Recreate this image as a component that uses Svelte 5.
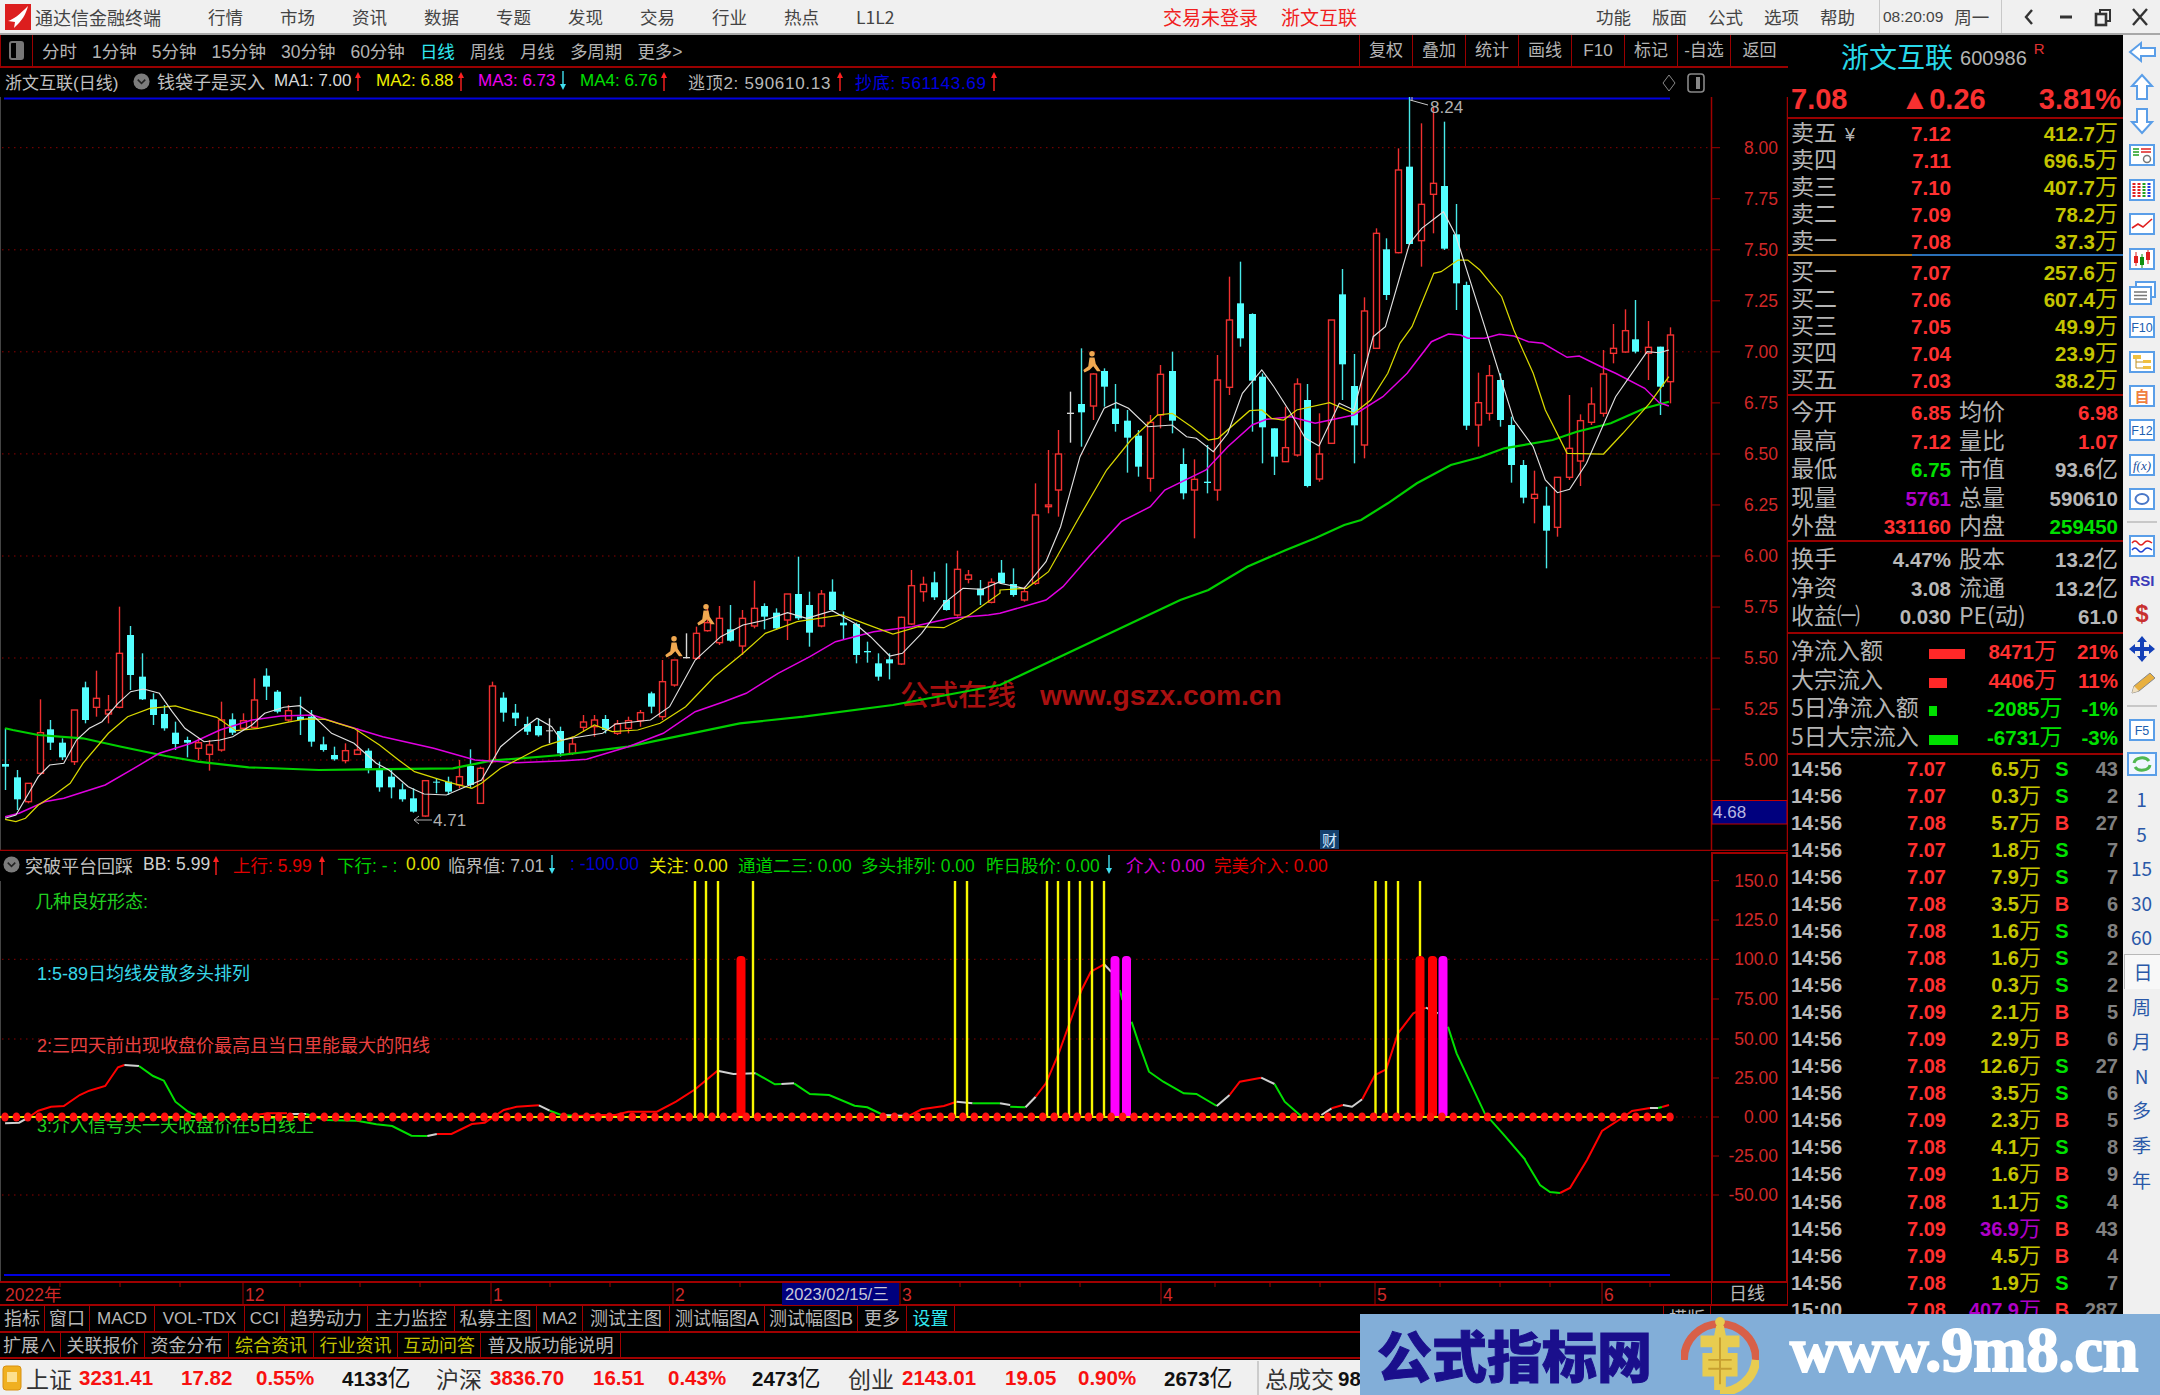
<script>
  const z9 = (x, y) => [x / 1.568, 520 + y / 3];
  const z8 = (x, y) => [1000 + x / 2.063, 80 + y / 3];
  const z6 = (x, y) => [x / 1.568, 840 + y / 3];
  const z7 = (x, y) => [1000 + x / 1.96, 840 + y / 3];
  const raw = (x, y) => [x, y];

  // x, kind, wick top, body top, body bottom, wick bottom
  const candlesA = [
    [8,"c",625,732,740,810],[27,"c",750,772,838,870],[44,"r",790,790,845,850],[62,"r",538,638,760,765],
    [79,"c",600,628,668,690],[97,"c",655,668,712,720],[116,"r",570,570,725,735],[133,"c",485,502,600,610],
    [151,"r",452,535,562,590],[169,"r",525,570,582,610],[187,"r",260,400,562,565],[204,"c",318,345,465,510],
    [222,"c",400,470,538,540],[240,"c",520,538,585,615],[257,"c",555,582,625,632],[275,"c",605,638,672,690],
    [293,"c",650,660,668,712],[311,"r",655,668,685,720],[328,"r",660,675,703,752],[346,"r",545,600,690,695],
    [364,"c",580,598,638,645],[381,"r",580,602,625,630],[399,"r",475,540,622,625],[417,"c",445,467,500,540],
    [434,"c",510,515,575,580],[452,"r",555,572,600,605],[470,"c",530,590,600,645],[487,"c",570,590,665,680],
    [506,"c",650,673,690,695],[523,"c",680,705,718,722],[541,"r",670,692,722,730],[559,"r",625,690,703,705],
    [577,"c",685,692,745,760],[595,"c",725,748,802,815],[613,"c",750,770,802,835],[631,"c",790,808,838,845],
    [648,"c",805,835,875,878],[667,"r",782,782,888,890],[684,"c",775,785,788,820],[702,"c",770,785,815,825],
    [719,"r",720,770,795,805],[737,"c",688,738,795,805],[753,"r",740,745,850,852],[772,"r",485,498,725,730],
    [789,"c",517,533,578,605],[807,"c",552,578,595,618],[826,"c",590,612,635,645],[843,"c",595,618,646,650],
    [861,"w",595,631,634,670],[878,"c",620,633,700,710],[897,"r",650,672,700,705],[914,"r",585,606,622,635],
    [932,"r",585,600,620,650],[949,"c",585,597,630,640],[967,"r",600,612,640,645],[985,"r",590,602,625,640],
    [1003,"r",570,578,602,620],[1021,"c",515,520,560,580],[1038,"r",420,485,590,600],[1057,"r",420,420,495,500],
    [1075,"w",340,411,415,415],[1092,"r",320,340,415,420],[1109,"r",265,308,332,335],[1127,"r",258,295,368,375],
    [1145,"c",255,328,362,365],[1163,"r",270,295,378,405],[1182,"r",182,265,318,325],[1198,"c",250,258,290,328],
    [1216,"c",265,278,325,330],[1234,"r",222,222,300,360],[1251,"c",110,222,295,300],[1269,"c",215,255,338,380],
    [1288,"r",210,222,318,322],[1304,"c",178,215,270,275],[1322,"c",275,308,316,360],[1342,"c",308,312,405,430],
    [1359,"c",365,393,397,428],[1377,"c",400,430,470,482],[1394,"c",400,418,430,478],[1412,"r",290,292,432,435],
    [1429,"r",150,197,312,315],[1447,"r",170,193,215,245],[1465,"c",155,187,232,240],[1483,"c",130,240,270,272],
    [1500,"r",92,148,285,290],[1518,"r",150,165,178,190],[1537,"c",180,206,226,255],[1554,"r",175,187,247,250]
  ];
  const candlesB = [
    [2,"c",1440,1478,1510,1510],[27,"c",1465,1512,1545,1550],[50,"r",1520,1535,1560,1565],[73,"r",1210,1305,1510,1515],
    [98,"r",1110,1275,1280,1300],[120,"r",1050,1122,1230,1310],[144,"w",935,998,1002,1088],[167,"c",805,972,997,1100],
    [191,"r",880,882,978,1020],[215,"c",865,873,920,980],[238,"c",912,986,1032,1055],[262,"c",990,1022,1073,1178],
    [285,"c",1050,1067,1160,1190],[309,"r",1005,1027,1195,1235],[331,"r",855,883,1005,1045],[355,"c",815,873,1022,1060],
    [377,"c",1105,1152,1240,1258],[401,"r",1138,1198,1230,1375],[427,"c",1095,1205,1209,1240],[448,"r",825,900,1230,1262],
    [473,"r",590,720,922,945],[495,"c",545,670,775,800],[519,"c",700,702,902,1055],[541,"c",880,890,1042,1150],
    [566,"c",1045,1045,1130,1185],[587,"r",980,1103,1145,1145],[612,"r",895,912,1125,1130],[634,"c",912,960,1218,1222],
    [658,"r",1000,1122,1197,1205],[683,"r",720,720,1090,1090],[705,"c",567,643,853,960],[730,"c",822,918,1036,1150],
    [751,"r",652,693,1095,1135],[776,"r",445,460,805,805],[797,"c",475,508,645,660],[822,"r",205,270,518,520],
    [844,"c",50,260,492,495],[869,"r",130,373,482,560],[893,"r",80,310,343,460],[915,"c",125,318,506,510],
    [940,"c",372,463,610,690],[961,"c",605,615,1037,1050],[987,"r",878,968,1035,1100],[1008,"r",855,887,1000,1022],
    [1032,"c",880,900,1020,1040],[1055,"c",1010,1035,1155,1208],[1079,"c",1140,1155,1253,1270],[1101,"r",1172,1243,1255,1330],
    [1126,"c",1220,1277,1352,1465],[1150,"r",1192,1192,1342,1370],[1173,"r",945,1105,1192,1200],[1197,"r",1003,1022,1143,1218],
    [1219,"r",922,972,1027,1035],[1243,"r",810,882,1000,1010],[1265,"r",732,805,820,850],[1290,"r",688,752,816,818],
    [1311,"c",660,778,815,820],[1337,"r",723,802,820,900],[1361,"c",800,800,920,1005],[1383,"r",742,765,905,970]
  ];
  const candles = [
    ...candlesA.map((c) => toCandle(c, z9)),
    ...candlesB.map((c) => toCandle(c, z8))
  ];
  function toCandle([x, kind, wt, bt, bb, wb], conv) {
    const px = Math.round(conv(x, 0)[0]) + 0.5;
    const y = (v) => conv(x, v)[1];
    return { x: px, kind, wt: y(wt), bt: y(bt), bb: y(bb), wb: y(wb) };
  }

  function poly(a, conv) {
    const out = [];
    for (let i = 0; i < a.length; i += 2) out.push(conv(a[i], a[i + 1]).map((v) => v.toFixed(1)).join(","));
    return out.join(" ");
  }

  const maLines = [
    { color: "#00d000", w: 2.2, pts: poly([8,625,20,630,60,645,130,655,190,680,260,708,310,725,390,742,500,750,570,748,710,745,770,722,880,705,985,680,1060,650,1160,610,1260,590,1400,555,1568,495], z9) + " " + poly([372,1560,430,1530,510,1460,590,1410,650,1375,710,1335,745,1320,800,1270,860,1210,930,1155,990,1132,1040,1105,1140,1080,1190,1055,1260,1030,1330,985,1380,965], z8) },
    { color: "#e000e0", w: 1.5, pts: poly([8,890,30,880,70,845,100,835,165,795,210,745,250,700,300,670,345,630,395,600,440,588,490,585,530,610,600,650,680,685,745,720,810,728,885,722,920,718,985,680,1040,640,1090,575,1135,545,1170,520,1220,460,1270,410,1310,365,1370,335,1430,320,1490,295,1550,285,1568,280], z9) + " " + poly([95,1560,130,1520,190,1420,250,1325,310,1280,340,1230,425,1170,470,1100,520,1035,550,1018,600,1010,650,1030,730,1005,790,950,840,880,890,785,925,762,950,765,965,775,1000,775,1030,763,1060,768,1090,785,1120,790,1170,832,1195,828,1240,860,1270,880,1330,925,1360,968,1380,978], z8) },
    { color: "#d8d800", w: 1.25, pts: poly([8,898,25,905,40,895,60,855,85,825,110,790,130,730,170,640,200,590,235,565,275,558,300,572,340,592,370,632,405,625,450,607,480,597,510,598,555,625,595,675,625,720,650,755,700,785,740,805,755,790,785,745,820,710,850,680,900,650,932,615,960,635,1000,630,1035,610,1075,560,1120,470,1165,400,1200,340,1250,305,1320,285,1355,310,1400,342,1440,320,1480,323,1520,285,1568,220], z9) + " " + poly([0,1530,55,1525,100,1475,160,1320,220,1170,270,1080,325,1005,355,1000,395,1040,430,1080,450,1075,515,992,540,990,560,1015,585,1020,612,990,680,968,730,1000,765,960,800,880,825,790,850,740,895,580,910,575,945,540,965,540,990,570,1035,650,1060,750,1100,880,1125,990,1170,1120,1245,1122,1285,1060,1340,970,1380,890], z8) },
    { color: "#e0e0e0", w: 1.15, pts: poly([8,895,25,885,45,820,60,770,78,735,100,730,120,660,140,625,160,605,185,550,205,515,225,507,250,520,270,575,290,625,320,665,345,660,365,650,395,615,415,580,445,562,470,557,490,585,520,640,555,670,590,730,610,750,640,800,665,822,700,825,730,800,755,780,785,680,810,640,842,595,865,620,880,660,910,650,945,640,965,612,1020,600,1050,560,1090,420,1130,350,1165,315,1200,300,1235,278,1265,295,1305,272,1340,310,1365,350,1395,408,1415,400,1445,340,1480,250,1510,205,1540,208,1568,185], z9) + " " + poly([0,1510,50,1525,95,1445,125,1340,165,1130,215,985,240,968,265,985,305,1040,355,1035,385,1070,405,1075,440,1115,470,1060,500,940,540,870,565,920,600,1000,630,1075,658,1098,700,970,730,990,770,770,795,740,845,490,870,445,915,395,940,465,1000,740,1060,1020,1100,1100,1125,1200,1150,1238,1175,1228,1210,1150,1270,950,1335,815,1360,818,1380,810], z8) }
  ];

  const priceGrid = [147.7, 249.8, 351.8, 453.9, 556, 658, 760];
  const priceLabels = ["8.00","7.75","7.50","7.25","7.00","6.75","6.50","6.25","6.00","5.75","5.50","5.25","5.00"];
  const walkers = [[674, 650], [706, 618], [1092, 365]];

  // indicator curve, segment by segment
  const curveColor = { r: "#ff0000", g: "#00e000", w: "#d0d0d0" };
  const curve = [
    ["w",z6,[8,850,30,848,45,832]],
    ["r",z6,[45,832,60,812,80,800,100,798,125,765,140,752,165,738,185,682,195,675]],
    ["w",z6,[195,675,218,678]],
    ["g",z6,[218,678,240,708,257,722,275,785,295,815,310,828]],
    ["r",z6,[400,825,420,820,450,820]],
    ["w",z6,[455,822,480,822]],
    ["g",z6,[480,822,510,840,560,842,590,853,615,858,645,887,670,888]],
    ["w",z6,[670,888,685,882]],
    ["r",z6,[685,882,708,882,740,852,760,848,790,810,810,800,845,796]],
    ["w",z6,[845,796,862,812]],
    ["g",z6,[862,812,880,825,905,828]],
    ["r",z6,[905,828,935,825,965,825,985,815,1030,815,1060,785,1090,748,1125,692]],
    ["w",z6,[1125,692,1150,702,1185,700]],
    ["g",z6,[1185,700,1215,733,1225,732]],
    ["w",z6,[1225,732,1245,730]],
    ["g",z6,[1245,730,1270,762,1300,765,1340,797,1360,802,1385,825]],
    ["w",z6,[1385,825,1425,828]],
    ["r",z6,[1425,828,1445,808,1480,798,1500,785]],
    ["w",z6,[1500,785,1525,790]],
    ["g",z6,[1525,790,1568,790]],
    ["w",z7,[0,790,20,795]],
    ["g",z7,[20,800,50,802]],
    ["w",z7,[50,802,70,770]],
    ["r",z7,[70,770,90,730,115,640,135,555,160,450,178,395,204,373]],
    ["w",z7,[204,373,218,395]],
    ["g",z7,[235,450,240,480]],
    ["g",z7,[258,545,272,610,292,695,320,725,360,760,385,762,425,798]],
    ["w",z7,[425,798,450,765]],
    ["r",z7,[450,765,470,725,512,713]],
    ["w",z7,[512,713,538,732]],
    ["g",z7,[538,732,558,785,590,828]],
    ["w",z7,[630,825,650,805]],
    ["r",z7,[650,805,672,795]],
    ["w",z7,[672,795,690,800,710,778]],
    ["r",z7,[710,778,735,705,757,688,780,580,810,520,835,503]],
    ["w",z7,[835,503,858,520]],
    ["g",z7,[878,560,895,640,950,820,985,880,1030,960]],
    ["g",raw,[1525,1160,1540,1185,1550,1192,1560,1193]],
    ["r",raw,[1560,1193,1570,1188,1587,1160,1602,1131,1625,1116,1632,1111,1650,1108]],
    ["w",raw,[1650,1108,1658,1108]],
    ["g",raw,[1658,1108,1662,1107]],
    ["r",raw,[1662,1107,1669,1105]]
  ].map(([c, conv, a]) => ({ color: curveColor[c], pts: poly(a, conv) }));

  const yellowBars = [695,706,718,753,955,967,1047,1058,1069,1080,1092,1104,1375.5,1386,1398,1420];
  const fatBars = [[741,"#ff0000"],[1115,"#ff00ff"],[1126.5,"#ff00ff"],[1420,"#ff0000"],[1432.5,"#ff0000"],[1443,"#ff00ff"]];
  const dots = Array.from({ length: 147 }, (_, i) => 5 + i * 11.404);
  const indLabels = [["150.0",880.7],["125.0",920],["100.0",959.3],["75.00",999],["50.00",1039],["25.00",1078],["0.00",1117],["-25.00",1156],["-50.00",1195]];
  const indGrid = [959.3, 1039, 1117, 1195];

  const axisMarks = [[243,"12"],[491,"1"],[673,""],[900,"3"],[1161,"4"],[1375,"5"],[1602,"6"]];
  const axisTicks = [60,120,180,300,360,420,550,610,740,820,960,1020,1080,1215,1270,1320,1440,1500,1550,1650];

  const menu = ["行情","市场","资讯","数据","专题","发现","交易","行业","热点","L1L2"];
  const menu2 = ["功能","版面","公式","选项","帮助"];
  const periods = ["分时","1分钟","5分钟","15分钟","30分钟","60分钟","日线","周线","月线","多周期","更多>"];
  const tools = ["复权","叠加","统计","画线","F10","标记","-自选","返回"];

  const asks = [["卖五","7.12","412.7"],["卖四","7.11","696.5"],["卖三","7.10","407.7"],["卖二","7.09","78.2"],["卖一","7.08","37.3"]];
  const bids = [["买一","7.07","257.6"],["买二","7.06","607.4"],["买三","7.05","49.9"],["买四","7.04","23.9"],["买五","7.03","38.2"]];
  const stats = [
    ["今开","6.85","red","均价","6.98","red"],["最高","7.12","red","量比","1.07","red"],["最低","6.75","green","市值","93.6亿","gray"],
    ["现量","5761","purple","总量","590610","gray"],["外盘","331160","red","内盘","259450","green"]
  ];
  const stats2 = [["换手","4.47%","股本","13.2亿"],["净资","3.08","流通","13.2亿"],["收益㈠","0.030","PE(动)","61.0"]];
  const flows = [
    ["净流入额",36,"red","8471万","21%"],["大宗流入",18,"red","4406万","11%"],
    ["5日净流入额",8,"green","-2085万","-1%"],["5日大宗流入",29,"green","-6731万","-3%"]
  ];
  const ticks = [
    ["14:56","7.07","6.5","S",43],["14:56","7.07","0.3","S",2],["14:56","7.08","5.7","B",27],["14:56","7.07","1.8","S",7],
    ["14:56","7.07","7.9","S",7],["14:56","7.08","3.5","B",6],["14:56","7.08","1.6","S",8],["14:56","7.08","1.6","S",2],
    ["14:56","7.08","0.3","S",2],["14:56","7.09","2.1","B",5],["14:56","7.09","2.9","B",6],["14:56","7.08","12.6","S",27],
    ["14:56","7.08","3.5","S",6],["14:56","7.09","2.3","B",5],["14:56","7.08","4.1","S",8],["14:56","7.09","1.6","B",9],
    ["14:56","7.08","1.1","S",4],["14:56","7.09","36.9","B",43],["14:56","7.09","4.5","B",4],["14:56","7.08","1.9","S",7],
    ["15:00","7.08","407.9","B",287]
  ];

  const tabs1 = [["指标",45],["窗口",45],["MACD",65,"lat"],["VOL-TDX",90,"lat"],["CCI",40,"lat"],["趋势动力",83],["主力监控",87],["私募主图",82],["MA2",46,"lat"],["测试主图",87],["测试幅图A",95],["测试幅图B",93],["更多",49],["设置",48,"cy"]];
  const tabs2 = [["扩展∧",61],["关联报价",84],["资金分布",84],["综合资讯",85,"ol"],["行业资讯",84,"ol"],["互动问答",83,"ol"],["普及版功能说明",140]];

  const infoRow = [
    ["MA1: 7.00","#d8d8d8",78,"up",22],["MA2: 6.88","#f0f000",79,"up",21],["MA3: 6.73","#f000f0",79,"down",21],
    ["MA4: 6.76","#00e000",78,"up",28],["逃顶2: 590610.13","#b8b8b8",146,"up",19],["抄底: 561143.69","#0000e0",133,"up",0]
  ];
  const indRow = [
    ["BB: 5.99","#d0d0d0",67,"up",21],["上行: 5.99","#e00000",83,"up",19],["下行: - :","#00d000",69,"",0],["0.00","#e0e000",40,"",2],
    ["临界值: 7.01","#b8b8b8",98,"down",22],[": -100.00","#0000d0",71,"",8],["关注: 0.00","#e8e800",81,"",8],
    ["通道二三: 0.00","#00d000",117,"",6],["多头排列: 0.00","#00d000",118,"",7],["昨日股价: 0.00","#00d000",117,"down",21],
    ["介入: 0.00","#d000d0",81,"",7],["完美介入: 0.00","#e00000",118,"",0]
  ];
  const statusRow = [
    ["上证","t",53],["3231.41","n",102],["17.82","n",75],["0.55%","n",86],["4133亿","b",94],
    ["沪深","t",54],["3836.70","n",103],["16.51","n",75],["0.43%","n",84],["2473亿","b",96],
    ["创业","t",54],["2143.01","n",103],["19.05","n",73],["0.90%","n",86],["2673亿","b",98],["总成交","s",81],["9851亿","b",90]
  ];
  const sideIcons = ["left","up","down","list","grid","trend","kline","win","F10","tree","self","F12","fx","ring","sep","wave","RSI","dollar","move","pencil","sep","F5","refresh"];
  const sideText = ["1","5","15","30","60","日","周","月","N","多","季","年"];
</script>

{#snippet arrow(dir)}
  <svg class="arrow" viewBox="0 0 8 20">
    {#if dir === "down"}
      <path d="M4 0V14" stroke="#40e0f0" stroke-width="1.4" />
      <path d="M1 13H7L4 19Z" fill="#40e0f0" />
    {:else}
      <path d="M4 6V20" stroke="#ff2020" stroke-width="1.4" />
      <path d="M1 7H7L4 1Z" fill="#ff2020" />
    {/if}
  </svg>
{/snippet}

{#snippet circleBtn()}
  <svg class="circle" viewBox="0 0 18 18">
    <circle cx="9" cy="9" r="8.5" fill="#7c7c7c" />
    <path d="M5 7L9 11L13 7" fill="none" stroke="#222" stroke-width="1.6" />
  </svg>
{/snippet}

{#snippet withUnit(text, unit)}
  {text.replace(unit, "")}{#if text.includes(unit)}<u>{unit}</u>{/if}
{/snippet}

{#snippet sideIcon(k)}
  <svg width="36" height="30" viewBox="0 0 36 30">
    {#if k === "left"}
      <path d="M6 15L17 6V11H31V19H17V24Z" fill="#fff" stroke="#5a9ee8" stroke-width="2" />
    {:else if k === "up"}
      <path d="M18 3L28 14H23V27H13V14H8Z" fill="#fff" stroke="#5a9ee8" stroke-width="2" />
    {:else if k === "down"}
      <path d="M18 27L28 16H23V3H13V16H8Z" fill="#fff" stroke="#5a9ee8" stroke-width="2" />
    {:else if k === "RSI"}
      <text x="18" y="21" text-anchor="middle" class="ic-bold" fill="#3a3ab8">RSI</text>
    {:else if k === "dollar"}
      <text x="18" y="23" text-anchor="middle" class="ic-big" fill="#c83030">$</text>
    {:else if k === "move"}
      <path d="M18 2L23 8H20V13H25V10L31 15L25 20V17H20V22H23L18 28L13 22H16V17H11V20L5 15L11 10V13H16V8H13Z" fill="#1440b8" />
    {:else if k === "pencil"}
      <path d="M8 25L10 18L26 5L31 10L15 23Z" fill="#e8b040" stroke="#888" />
      <path d="M8 25L10 18L15 23Z" fill="#f0e0c0" />
    {:else if k === "win"}
      <rect x="12" y="4" width="19" height="15" fill="#fff" stroke="#5a9ee8" stroke-width="2" />
      <rect x="6" y="9" width="21" height="17" fill="#fff" stroke="#5a9ee8" stroke-width="2" />
      <path d="M10 14H23M10 17.5H23M10 21H23" stroke="#777" stroke-width="1.4" />
    {:else if k === "refresh"}
      <rect x="4" y="4" width="28" height="22" fill="#f0f6ff" stroke="#5a9ee8" stroke-width="2" />
      <path d="M10 14A8 6 0 0 1 25 12M26 16A8 6 0 0 1 11 18" fill="none" stroke="#50b850" stroke-width="3" />
    {:else}
      <rect x="6" y="5" width="24" height="20" fill="#fff" stroke="#5a9ee8" stroke-width="2" />
      {#if k === "list"}
        <path d="M9 9H15M9 12H15M9 15H15" stroke="#20a020" stroke-width="1.6" />
        <path d="M17 9H27M17 12H27" stroke="#e02020" stroke-width="1.6" />
        <circle cx="23" cy="19" r="3.5" fill="#fff" stroke="#777" stroke-width="1.5" />
      {:else if k === "grid"}
        <path d="M10 8V22" stroke="#e02020" stroke-width="3" stroke-dasharray="2 1" />
        <path d="M15 8V22" stroke="#e02020" stroke-width="3" stroke-dasharray="2 1" />
        <path d="M20 8V22" stroke="#20a020" stroke-width="3" stroke-dasharray="2 1" />
        <path d="M25 8V22" stroke="#2040e0" stroke-width="3" stroke-dasharray="2 1" />
      {:else if k === "trend"}
        <path d="M8 19L14 15L19 18L28 10" fill="none" stroke="#e02020" stroke-width="1.6" />
      {:else if k === "kline"}
        <path d="M12 8V22" stroke="#e02020" /><rect x="10" y="12" width="4" height="7" fill="#e02020" />
        <path d="M18 10V24" stroke="#109010" /><rect x="16" y="13" width="4" height="8" fill="#109010" />
        <path d="M24 6V20" stroke="#e02020" /><rect x="22" y="8" width="4" height="8" fill="#e02020" />
      {:else if k === "tree"}
        <rect x="9" y="8" width="8" height="4" fill="#f0c040" /><rect x="19" y="13" width="8" height="3" fill="#f0c040" /><rect x="19" y="19" width="8" height="3" fill="#f0c040" />
        <path d="M12 12V21H19M12 15H19" fill="none" stroke="#c09020" />
      {:else if k === "self"}
        <text x="18" y="21" text-anchor="middle" class="ic-self" fill="#f08040">自</text>
      {:else if k === "fx"}
        <text x="18" y="20" text-anchor="middle" class="ic-fx" fill="#2050a0">f(x)</text>
      {:else if k === "ring"}
        <ellipse cx="18" cy="15" rx="6.5" ry="5" fill="none" stroke="#4a78c8" stroke-width="2" />
      {:else if k === "wave"}
        <path d="M8 12Q11 8 14 12T20 12T28 12" fill="none" stroke="#e02020" stroke-width="1.4" />
        <path d="M8 19Q11 15 14 19T20 19T28 19" fill="none" stroke="#2040d0" stroke-width="1.4" />
      {:else}
        <text x="18" y="20" text-anchor="middle" class="ic-f" fill="#2060b0">{k}</text>
      {/if}
    {/if}
  </svg>
{/snippet}

<div class="page">
  <header class="title">
    <svg class="logo" viewBox="0 0 26 26">
      <rect width="26" height="26" fill="#dc1e1e" />
      <path d="M3 17C9 15 14 11 23 2C21 10 17 17 9 24L10 18Z" fill="#fff" />
    </svg>
    <span class="app-name">通达信金融终端</span>
    <nav class="menu">
      {#each menu as m}<span>{m}</span>{/each}
    </nav>
    <div class="trade-login">
      <span>交易未登录</span>
      <span>浙文互联</span>
    </div>
    <nav class="menu2">
      {#each menu2 as m}<span>{m}</span>{/each}
    </nav>
    <div class="clock"><span class="time">08:20:09</span><span>周一</span></div>
    <div class="winbtns">
      <svg viewBox="0 0 20 20"><path d="M13 3L7 10L13 17" fill="none" stroke="#333" stroke-width="2.4" /></svg>
      <svg viewBox="0 0 20 20"><path d="M4 10H16" stroke="#333" stroke-width="3" /></svg>
      <svg viewBox="0 0 20 20"><rect x="3" y="7" width="10" height="11" fill="none" stroke="#333" stroke-width="2.6" /><path d="M7 6V3H17V14H14" fill="none" stroke="#333" stroke-width="2" /></svg>
      <svg viewBox="0 0 20 20"><path d="M3 2L17 18M17 2L3 18" stroke="#333" stroke-width="2.4" /></svg>
    </div>
  </header>

  <div class="body">
    <div class="workspace">
      <div class="chart-col">
        <div class="toolbar">
          <div class="panel-toggle"><span></span></div>
          <div class="periods">
            {#each periods as p}<span class:on={p === "日线"}>{p}</span>{/each}
          </div>
          <div class="tools">
            {#each tools as t}<span>{t}</span>{/each}
          </div>
        </div>

        <div class="info-row">
          <span class="stock-name">浙文互联(日线)</span>
          {@render circleBtn()}
          <span class="formula">钱袋子是买入</span>
          {#each infoRow as [text, color, w, dir, gap]}
            <span class="seg" class:spaced={w > 100} style="width:{w}px;color:{color}">{text}</span>
            {@render arrow(dir)}
            <span style="width:{gap - 8}px"></span>
          {/each}
          <svg class="diamond" viewBox="0 0 14 18"><path d="M7 1L13 9L7 17L1 9Z" fill="none" stroke="#888" /></svg>
          <svg class="side-toggle" viewBox="0 0 18 20"><rect x="1" y="1" width="16" height="18" rx="3" fill="none" stroke="#888" stroke-width="1.6" /><rect x="9" y="4" width="4" height="12" fill="#888" /></svg>
        </div>

        <svg class="main-chart" viewBox="0 97 1788 754" width="1788" height="754">
          <line x1="0.5" y1="97" x2="0.5" y2="851" stroke="#444" />
          {#each priceGrid as y}
            <line x1="2" x2="1711" y1={y} y2={y} stroke="#8c0000" stroke-dasharray="1.5 4.5" />
          {/each}
          <line x1="4" x2="1670" y1="98.5" y2="98.5" stroke="#0000e0" stroke-width="2" />
          <line x1="1711.5" x2="1711.5" y1="97" y2="851" stroke="#a00000" stroke-width="1.5" />
          <line x1="1787.5" x2="1787.5" y1="97" y2="851" stroke="#a00000" stroke-width="1.5" />
          <line x1="0" x2="1788" y1="850.5" y2="850.5" stroke="#a00000" stroke-width="1.5" />

          {#each priceLabels as label, i}
            <line x1="1711" x2="1720" y1={147.7 + i * 51.04} y2={147.7 + i * 51.04} stroke="#a00000" />
            <text class="axis-text" x="1778" y={153.7 + i * 51.04} text-anchor="end">{label}</text>
          {/each}

          <text class="promo" x="900" y="706">公式在线</text>
          <text class="promo-url" x="1040" y="705">www.gszx.com.cn</text>

          {#each candles as c}
            {#if c.kind === "r"}
              <line x1={c.x} x2={c.x} y1={c.wt} y2={c.bt} stroke="#f03030" stroke-width="1.4" />
              <line x1={c.x} x2={c.x} y1={c.bb} y2={c.wb} stroke="#f03030" stroke-width="1.4" />
              <rect x={c.x - 3} y={c.bt} width="6" height={c.bb - c.bt} fill="#000" stroke="#f03030" stroke-width="1.4" />
            {:else}
              <line x1={c.x} x2={c.x} y1={c.wt} y2={c.wb} stroke={c.kind === "w" ? "#d8d8d8" : "#48e8e8"} stroke-width="1.4" />
              <rect x={c.x - 3.5} y={c.bt} width="7" height={c.bb - c.bt} fill={c.kind === "w" ? "#d8d8d8" : "#54ffff"} />
            {/if}
          {/each}

          {#each maLines as l}
            <polyline points={l.pts} fill="none" stroke={l.color} stroke-width={l.w} />
          {/each}

          {#each walkers as [x, y]}
            <g transform="translate({x} {y}) scale(1.25)" fill="#f0a850">
              <circle cx="0" cy="-9" r="2.2" />
              <path d="M-2 -6H2L3 -1L7 5L4 5L1 1L-2 4L-6 6L-7 4L-3 1Z" />
            </g>
          {/each}

          <path d="M1412 101L1412 97M1410 100L1428 105" fill="none" stroke="#c8c8c8" />
          <text class="mark-text" x="1430" y="113">8.24</text>
          <path d="M414 820H432M414 820L419 816M414 820L419 824" fill="none" stroke="#b0b0b0" />
          <text class="mark-text" x="433" y="826">4.71</text>

          <rect x="1712" y="800.5" width="75" height="23.5" fill="#00007e" stroke="#c00000" />
          <text class="last-price" x="1713" y="818">4.68</text>
          <rect x="1320" y="830" width="19" height="19" fill="#14406e" />
          <text class="cai" x="1329.5" y="846" text-anchor="middle">财</text>
        </svg>

        <div class="ind-head">
          {@render circleBtn()}
          <span class="ind-name">突破平台回踩</span>
          {#each indRow as [text, color, w, dir, gap]}
            <span class="seg" style="width:{w}px;color:{color}">{text}</span>
            {#if dir}{@render arrow(dir)}{/if}
            <span style="width:{dir ? gap - 8 : gap}px"></span>
          {/each}
        </div>

        <svg class="ind-chart" viewBox="0 881 1788 400" width="1788" height="400">
          <line x1="0.5" y1="881" x2="0.5" y2="1281" stroke="#444" />
          {#each indGrid as y}
            <line x1="2" x2="1711" y1={y} y2={y} stroke="#8c0000" stroke-dasharray="1.5 4.5" />
          {/each}
          <line x1="1712" x2="1712" y1="881" y2="1281" stroke="#a00000" stroke-width="2" />
          <line x1="1787" x2="1787" y1="881" y2="1281" stroke="#a00000" stroke-width="2" />
          {#each indLabels as [t, y]}
            <line x1="1711" x2="1719" y1={y} y2={y} stroke="#a00000" />
            <text class="axis-text" x="1778" y={y + 6} text-anchor="end">{t}</text>
          {/each}

          <text class="note" x="35" y="908" fill="#20d020">几种良好形态:</text>
          <text class="note" x="37" y="980" fill="#38d8e8">1:5-89日均线发散多头排列</text>
          <text class="note" x="37" y="1052" fill="#e84040">2:三四天前出现收盘价最高且当日里能最大的阳线</text>
          <text class="note" x="37" y="1132" fill="#20d020">3:介入信号头一天收盘价在5日线上</text>

          {#each curve as s}
            <polyline points={s.pts} fill="none" stroke={s.color} stroke-width="2" />
          {/each}

          {#each yellowBars as x}
            <line x1={x} x2={x} y1="881" y2="1117" stroke="#f8f800" stroke-width="2.4" />
          {/each}
          {#each fatBars as [x, color]}
            <rect x={x - 4.5} y="956" width="9" height="162" rx="4" fill={color} />
          {/each}

          <line x1="0" x2="1670" y1="1117" y2="1117" stroke="#e8e800" stroke-width="2" />
          {#each dots as x}
            <ellipse cx={x} cy="1117" rx="3.8" ry="4.5" fill="#ff1010" />
          {/each}
          <line x1="4" x2="1670" y1="1275" y2="1275" stroke="#0000e0" stroke-width="2" />
        </svg>

        <svg class="axis-row" viewBox="0 1281 1788 25" width="1788" height="25">
          <line x1="0" x2="1788" y1="1282" y2="1282" stroke="#a00000" stroke-width="2" />
          <line x1="0" x2="1788" y1="1305" y2="1305" stroke="#a00000" stroke-width="2" />
          <text class="axis-text" x="5" y="1301">2022年</text>
          {#each axisTicks as x}
            <line x1={x} x2={x} y1="1282" y2="1287" stroke="#a00000" />
          {/each}
          {#each axisMarks as [x, t]}
            <line x1={x} x2={x} y1="1282" y2="1305" stroke="#a00000" />
            <text class="axis-text" x={x + 2} y="1301">{t}</text>
          {/each}
          <text class="axis-text" x="675" y="1301">2</text>
          <rect x="782" y="1283" width="117" height="22" fill="#00007e" />
          <text class="date-text" x="785" y="1300">2023/02/15/三</text>
          <line x1="1711.5" x2="1711.5" y1="1281" y2="1306" stroke="#a00000" />
          <line x1="1787.5" x2="1787.5" y1="1281" y2="1306" stroke="#a00000" />
          <text class="day-text" x="1729" y="1300">日线</text>
        </svg>

        <div class="tabs">
          {#each tabs1 as [t, w, cls]}
            <span class={cls} style="width:{w}px">{t}</span>
          {/each}
          <i class="tabs-gap"></i>
          <span class="tail">模版</span>
        </div>
        <div class="tabs last">
          {#each tabs2 as [t, w, cls]}
            <span class={cls} style="width:{w}px">{t}</span>
          {/each}
        </div>
      </div>

      <aside class="quote">
        <div class="quote-title">
          <span class="q-name">浙文互联</span>
          <span class="q-code">600986</span>
          <sup class="q-r">R</sup>
        </div>
        <div class="quote-price">
          <span>7.08</span><span>▲0.26</span><span>3.81%</span>
        </div>

        <div class="book">
          {#each asks as [l, p, v], i}
            <div class="book-row">
              <span class="lbl">{l}{#if i === 0}<em class="yen">¥</em>{/if}</span>
              <b class="red">{p}</b><b class="olive">{v}<u>万</u></b>
            </div>
          {/each}
        </div>
        <div class="book book-bids">
          {#each bids as [l, p, v]}
            <div class="book-row">
              <span class="lbl">{l}</span>
              <b class="red">{p}</b><b class="olive">{v}<u>万</u></b>
            </div>
          {/each}
        </div>

        <div class="stats stats1">
          {#each stats as [a, b, c, d, e, f]}
            <div class="stat-row">
              <span class="lbl">{a}</span><b class={c}>{b}</b>
              <span class="lbl lbl2">{d}</span><b class={f}>{@render withUnit(e, "亿")}</b>
            </div>
          {/each}
        </div>
        <div class="stats stats2">
          {#each stats2 as [a, b, c, d]}
            <div class="stat-row">
              <span class="lbl">{a}</span><b class="gray">{b}</b>
              <span class="lbl lbl2">{c}</span><b class="gray">{@render withUnit(d, "亿")}</b>
            </div>
          {/each}
        </div>
        <div class="stats flows">
          {#each flows as [l, w, c, a, pct]}
            <div class="flow-row">
              <span class="lbl">{l}</span>
              <span class="bar-cell"><i class="bar-{c}" style="width:{w}px"></i></span>
              <b class={c}>{@render withUnit(a, "万")}</b>
              <b class={c}>{pct}</b>
            </div>
          {/each}
        </div>

        <div class="tick-list">
          {#each ticks as [t, p, v, side, n]}
            <div class="tick-row">
              <b class="gray">{t}</b>
              <b class="red">{p}</b>
              <b class={v > 30 ? "purple" : "olive"}>{v}<u>万</u></b>
              <b class={side === "B" ? "red" : "green"}>{side}</b>
              <b class="dim">{n}</b>
            </div>
          {/each}
        </div>
      </aside>
    </div>

    <aside class="sidebar">
      {#each sideIcons as k}
        {#if k === "sep"}
          <hr />
        {:else}
          <div class="side-item">{@render sideIcon(k)}</div>
        {/if}
      {/each}
      {#each sideText as t}
        <div class="side-item side-text" class:active={t === "日"}>{t}</div>
      {/each}
    </aside>
  </div>

  <footer class="status">
    <svg class="status-icon" viewBox="0 0 20 26">
      <rect x="1" y="1" width="18" height="24" rx="3" fill="#f0b020" stroke="#d89010" />
      <rect x="5" y="7" width="10" height="10" fill="#fce090" />
    </svg>
    {#each statusRow as [t, cls, w]}
      <span class="st-{cls}" style="width:{w}px">{@render withUnit(t, "亿")}</span>
    {/each}
  </footer>

  <div class="banner">
    <span class="b-cn">公式指标网</span>
    <svg class="b-logo" viewBox="0 0 80 80">
      <path d="M3 45A37 37 0 0 1 77 45" fill="none" stroke="#d86048" stroke-width="8" />
      <path d="M77 45A37 37 0 0 1 40 78" fill="none" stroke="#e8cc50" stroke-width="9" />
      <circle cx="40" cy="6" r="5" fill="#e8cc50" />
      <path d="M36 10H44L46 20H60V32H48V38H58V62H46V76H34V62H22V38H32V32H20V20H34Z" fill="#e8cc50" />
      <path d="M28 45H52M28 54H52M40 22V70" stroke="#c8a030" stroke-width="2" />
    </svg>
    <span class="b-url">www.9m8.cn</span>
  </div>
</div>

<style>
  :global(body) {
    margin: 0;
    background: #000;
  }
  .page {
    position: relative;
    width: 2160px;
    height: 1395px;
    overflow: hidden;
    display: flex;
    flex-direction: column;
    background: #000;
    font-family: "Liberation Sans", "Noto Sans CJK SC", sans-serif;
  }

  .title {
    height: 33px;
    flex: none;
    display: flex;
    align-items: center;
    background: #f0f0f0;
    border-bottom: 2px solid #a8a8a8;
    font-size: 17.5px;
    color: #444;
    font-family: "Noto Sans CJK SC", sans-serif;
  }
  .logo {
    width: 26px;
    height: 26px;
    margin-left: 5px;
    flex: none;
  }
  .app-name {
    font-size: 18px;
    width: 173px;
    margin-left: 4px;
  }
  .menu {
    display: flex;
    width: 955px;
  }
  .menu span {
    width: 72px;
  }
  .trade-login {
    display: flex;
    gap: 23px;
    width: 433px;
    font-size: 19px;
    color: #f02020;
  }
  .menu2 {
    display: flex;
    gap: 21px;
    width: 283px;
  }
  .clock {
    display: flex;
    align-items: center;
    gap: 11px;
    height: 33px;
    width: 123px;
    border-left: 1px solid #c8c8c8;
    border-right: 1px solid #c8c8c8;
    padding-left: 3px;
    box-sizing: border-box;
  }
  .time {
    font-family: "Liberation Sans", sans-serif;
    font-size: 15.5px;
  }
  .winbtns {
    display: flex;
    gap: 17px;
    margin-left: 17px;
  }
  .winbtns svg {
    width: 20px;
    height: 20px;
  }

  .body {
    flex: 1;
    min-height: 0;
    display: flex;
  }
  .workspace {
    width: 2123px;
    display: flex;
    flex: none;
  }
  .chart-col {
    width: 1788px;
    flex: none;
  }

  .toolbar {
    height: 31px;
    display: flex;
    align-items: stretch;
    border-bottom: 2px solid #9a0000;
    color: #b4b4b4;
    font-size: 17.5px;
  }
  .panel-toggle {
    width: 33px;
    flex: none;
    border-right: 1px solid #9a0000;
    border-left: 1px solid #9a0000;
    display: flex;
    align-items: center;
    justify-content: center;
    box-sizing: border-box;
  }
  .panel-toggle span {
    width: 11px;
    height: 15px;
    border: 2px solid #777;
    border-radius: 3px;
    background: linear-gradient(90deg, transparent 50%, #777 50%);
  }
  .periods {
    display: flex;
    align-items: center;
    gap: 15px;
    margin-left: 9px;
    flex: 1;
  }
  .periods .on {
    color: #30e8f0;
  }
  .tools {
    display: flex;
    font-size: 17px;
  }
  .tools span {
    width: 52px;
    line-height: 31px;
    border-left: 1px solid #9a0000;
    text-align: center;
    white-space: nowrap;
  }
  .tools span:last-child {
    width: 57px;
  }

  .info-row,
  .ind-head {
    display: flex;
    align-items: center;
    color: #c0c0c0;
    white-space: nowrap;
    position: relative;
    box-sizing: border-box;
  }
  .info-row {
    height: 29px;
    padding: 0 0 3px 5px;
    font-size: 17px;
  }
  .stock-name {
    width: 128px;
    flex: none;
    font-size: 17px;
  }
  .circle {
    width: 17px;
    height: 17px;
    flex: none;
  }
  .formula {
    width: 117px;
    margin-left: 7px;
    flex: none;
    font-size: 18px;
  }
  .seg {
    flex: none;
  }
  .spaced {
    letter-spacing: 0.7px;
  }
  .arrow {
    width: 8px;
    height: 20px;
    flex: none;
    margin-left: 2px;
  }
  .diamond {
    position: absolute;
    left: 1662px;
    top: 6px;
    width: 14px;
    height: 18px;
  }
  .side-toggle {
    position: absolute;
    left: 1687px;
    top: 5px;
    width: 18px;
    height: 20px;
  }

  .main-chart,
  .ind-chart,
  .axis-row {
    display: block;
  }
  .ind-chart {
    overflow: visible;
  }
  .axis-text {
    font: 17.5px "Liberation Sans", "Noto Sans CJK SC", sans-serif;
    fill: #d02828;
  }
  .promo {
    font: 500 29px "Noto Sans CJK SC", sans-serif;
    fill: #a81010;
  }
  .promo-url {
    font: bold 28.2px "Liberation Sans", sans-serif;
    fill: #a81010;
  }
  .mark-text {
    font: 17px "Liberation Sans", sans-serif;
    fill: #b0b0b0;
  }
  .last-price {
    font: 17px "Liberation Sans", sans-serif;
    fill: #b8b8e0;
  }
  .cai {
    font: 15px "Noto Sans CJK SC", sans-serif;
    fill: #d0e8ff;
  }
  .note {
    font: 18px "Liberation Sans", "Noto Sans CJK SC", sans-serif;
  }
  .date-text {
    font: 16.5px "Liberation Sans", "Noto Sans CJK SC", sans-serif;
    fill: #c8c8d8;
  }
  .day-text {
    font: 18px "Noto Sans CJK SC", sans-serif;
    fill: #b8b8b8;
  }

  .ind-head {
    height: 30px;
    padding: 0 0 3px 3px;
    font-size: 17.5px;
  }
  .ind-head::after {
    content: "";
    position: absolute;
    left: 1711px;
    top: 1px;
    width: 77px;
    bottom: 0;
    box-sizing: border-box;
    border: 2px solid #a00000;
    border-bottom: 0;
  }
  .ind-name {
    width: 118px;
    margin-left: 5px;
    flex: none;
    font-size: 18px;
  }

  .tabs {
    height: 25px;
    display: flex;
    border-bottom: 2px solid #a00000;
    font-size: 18px;
    color: #b8b8b8;
    white-space: nowrap;
  }
  .tabs.last {
    height: 23.5px;
  }
  .tabs span {
    border-right: 1px solid #a00000;
    text-align: center;
    line-height: 26px;
    box-sizing: border-box;
    flex: none;
    overflow: hidden;
  }
  .tabs .lat {
    font-size: 17px;
  }
  .tabs .cy {
    color: #30e8f0;
  }
  .tabs .ol {
    color: #c0c000;
  }
  .tabs-gap {
    width: 708px;
    border-right: 1px solid #a00000;
    flex: none;
  }
  .tabs .tail {
    width: 47px;
  }

  .quote {
    width: 335px;
    flex: none;
    font-size: 23px;
    color: #b4b4b4;
    font-family: "Noto Sans CJK SC", sans-serif;
    line-height: 1;
  }
  .quote b {
    font: bold 20.5px/27px "Liberation Sans", sans-serif;
    white-space: nowrap;
  }
  .quote u, .status u {
    text-decoration: none;
    font: 23px/1 "Noto Sans CJK SC", sans-serif;
  }
  .red { color: #ff3030; }
  .green { color: #00e000; }
  .gray { color: #b8b8b8; }
  .olive { color: #c4c400; }
  .purple { color: #b000c8; }
  .dim { color: #808080; }

  .quote-title {
    height: 41px;
    display: flex;
    align-items: center;
    padding-left: 53px;
    color: #28d8e8;
  }
  .q-name {
    font-size: 28px;
  }
  .q-code {
    font: 20px "Liberation Sans", sans-serif;
    color: #b4b4b4;
    margin-left: 7px;
    margin-top: 5px;
  }
  .q-r {
    font: 15px "Liberation Sans", sans-serif;
    color: #e03030;
    margin: -14px 0 0 7px;
  }
  .quote-price {
    height: 43px;
    display: flex;
    justify-content: space-between;
    align-items: center;
    padding: 6px 2px 0 3px;
    font: bold 29px "Liberation Sans", sans-serif;
    color: #f83030;
    border-bottom: 2px solid #9a0000;
    box-sizing: border-box;
  }

  .book {
    height: 138px;
    margin-top: -1px;
    border-bottom: 2px solid;
    border-image: linear-gradient(90deg, #b07818 37%, #2a70b8 37%) 1;
    box-sizing: border-box;
  }
  .book-bids {
    height: 140px;
    margin-top: 0;
    padding-top: 1px;
    border-bottom: 2px solid #9a0000;
    border-image: none;
  }
  .book-row,
  .stat-row,
  .flow-row,
  .tick-row {
    display: grid;
    align-items: baseline;
    line-height: 27px;
    white-space: nowrap;
  }
  .book-row {
    grid-template-columns: 115px 45px 1fr;
    height: 27px;
    padding: 0 5px 0 3px;
  }
  .book-row b {
    text-align: right;
  }
  .lbl {
    white-space: nowrap;
  }
  .yen {
    font: 18px "Liberation Sans", sans-serif;
    margin-left: 8px;
  }

  .stats {
    border-bottom: 2px solid #9a0000;
  }
  .stats1 {
    padding-top: 1px;
  }
  .stats2 {
    padding: 2.5px 0 2px;
  }
  .flows {
    padding: 2.5px 0;
  }
  .stat-row {
    grid-template-columns: 85px 75px 60px 1fr;
    height: 28.5px;
    padding: 0 5px 0 3px;
  }
  .stat-row b {
    text-align: right;
  }
  .lbl2 {
    padding-left: 8px;
  }
  .flow-row {
    grid-template-columns: 138px 58px 70px 1fr;
    height: 28.5px;
    padding: 0 5px 0 3px;
  }
  .flow-row b {
    text-align: right;
  }
  .bar-cell {
    display: flex;
    align-items: center;
    height: 20px;
  }
  .bar-cell i {
    height: 10px;
    display: block;
  }
  .bar-red { background: #ff2828; }
  .bar-green { background: #00e000; }

  .tick-row {
    grid-template-columns: 116px 39px 95px 30px 1fr;
    height: 27.07px;
    padding: 0 5px 0 3px;
  }
  .tick-row b {
    font-size: 20px;
    text-align: right;
  }
  .tick-row b:first-child {
    text-align: left;
  }
  .tick-row b:nth-child(4) {
    text-align: center;
    padding-left: 12px;
  }
  .tick-row u {
    font-size: 22px;
  }

  .sidebar {
    width: 37px;
    flex: none;
    background: #f0f0f0;
    display: flex;
    flex-direction: column;
    align-items: center;
  }
  .side-item {
    width: 37px;
    height: 34.4px;
    flex: none;
    display: flex;
    align-items: center;
    justify-content: center;
  }
  .side-text {
    font: 19px "Noto Sans CJK SC", sans-serif;
    color: #2a58a8;
    height: 34.6px;
  }
  .side-text.active {
    background: #f8f8f8;
    border-top: 1px solid #b8b8b8;
    border-left: 1px solid #b8b8b8;
    box-sizing: border-box;
    margin-left: 2px;
  }
  hr {
    width: 30px;
    margin: 5px 0;
    border: 0;
    border-top: 2px solid #c8c8c8;
  }
  .ic-bold { font: bold 15px "Liberation Sans", sans-serif; }
  .ic-big { font: bold 24px "Liberation Sans", sans-serif; }
  .ic-self { font: bold 15px "Noto Sans CJK SC", sans-serif; }
  .ic-fx { font: italic 13px "Liberation Serif", serif; }
  .ic-f { font: 12.5px "Liberation Sans", sans-serif; }

  .status {
    height: 35px;
    flex: none;
    display: flex;
    align-items: center;
    background: #f0f0f0;
    padding-left: 2px;
    white-space: nowrap;
  }
  .status span {
    flex: none;
  }
  .status-icon {
    width: 20px;
    height: 26px;
    margin-right: 4px;
  }
  .st-t, .st-s {
    font: 23px "Noto Sans CJK SC", sans-serif;
    color: #333;
  }
  .st-n {
    font: bold 20.5px "Liberation Sans", sans-serif;
    color: #f81010;
  }
  .st-b {
    font: bold 20.5px "Liberation Sans", "Noto Sans CJK SC", sans-serif;
    color: #111;
  }
  .st-s {
    border-left: 2px solid #ccc;
    padding-left: 6px;
    margin-left: -5px;
    box-sizing: border-box;
  }

  .banner {
    position: absolute;
    left: 1360px;
    top: 1314px;
    width: 800px;
    height: 81px;
    background: #82aed8;
    display: flex;
    align-items: center;
  }
  .b-cn {
    font: 900 55px "Noto Sans CJK SC", sans-serif;
    color: #1a0f8c;
    -webkit-text-stroke: 1px #1a0f8c;
    margin-left: 17px;
    margin-top: -3px;
    width: 280px;
    white-space: nowrap;
    flex: none;
  }
  .b-logo {
    width: 78px;
    height: 78px;
    margin-left: 24px;
    flex: none;
  }
  .b-url {
    font: bold 64px "Liberation Serif", serif;
    color: #fff;
    -webkit-text-stroke: 2px #fff;
    margin-left: 31px;
    white-space: nowrap;
    margin-top: -9px;
  }
</style>
